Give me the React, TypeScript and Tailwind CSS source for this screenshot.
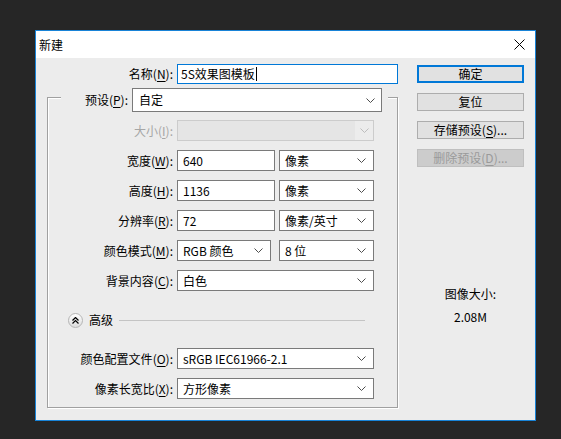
import type { ReactNode } from "react"

function Chevron({ color = "#4d4d4d" }: { color?: string }) {
  return (
    <svg width="9" height="5" viewBox="0 0 9 5" className="shrink-0">
      <path d="M0.5 0.5 L4.5 4.5 L8.5 0.5" fill="none" stroke={color} strokeWidth="1" />
    </svg>
  )
}

function Label({ text, k, className, dim }: { text: string; k: string; className: string; dim?: boolean }) {
  return (
    <span className={`shrink-0 text-right whitespace-nowrap ${dim ? "text-[#a6a6a6]" : "text-black"} ${className}`}>
      {text}(<u className="underline-offset-[2px]">{k}</u>):
    </span>
  )
}

function Select({ value, className }: { value: string; className: string }) {
  return (
    <div className={`flex h-[21px] items-center justify-between border border-[#7a7a7a] bg-white pl-[5px] pr-[7px] ${className}`}>
      <span className="whitespace-nowrap">{value}</span>
      <Chevron />
    </div>
  )
}

function Input({ value, className }: { value: string; className: string }) {
  return (
    <div className={`flex h-[21px] items-center border border-[#7a7a7a] bg-white pl-[5px] ${className}`}>
      {value}
    </div>
  )
}

function Row({ label, k, children, top }: { label: string; k: string; children: ReactNode; top: string }) {
  return (
    <div className={`flex h-[21px] items-center gap-[4px] ${top}`}>
      <Label text={label} k={k} className="w-[125px]" />
      {children}
    </div>
  )
}

function Button({ children, variant }: { children: ReactNode; variant?: "default" | "disabled" }) {
  const look =
    variant === "default"
      ? "border-2 border-[#0078d7] bg-[#e1e1e1] text-black"
      : variant === "disabled"
        ? "border border-[#bfbfbf] bg-[#cccccc] text-[#9a9a9a]"
        : "border border-[#adadad] bg-[#e1e1e1] text-black"
  return (
    <div className={`flex h-[18px] w-[107px] items-center justify-center whitespace-nowrap ${look}`}>{children}</div>
  )
}

export default function App() {
  return (
    <div className="h-[439px] w-[561px] bg-[#262626] pl-[35px] pt-[30px] font-['Microsoft_YaHei','Noto_Sans_CJK_SC',sans-serif] text-[12px] leading-[16px] text-black">
      <div className="flex h-[391px] w-[501px] flex-col border border-[#1883d7] bg-[#ececec]">
        {/* title bar */}
        <div className="flex h-[27px] items-center justify-between bg-white pl-[3px] pr-[10px]">
          <span>新建</span>
          <svg width="11" height="11" viewBox="0 0 11 11">
            <path d="M0.5 0.5 L10.5 10.5 M10.5 0.5 L0.5 10.5" stroke="#000" strokeWidth="1" />
          </svg>
        </div>

        <div className="flex flex-1">
          {/* left column */}
          <div className="flex w-[362px] flex-col">
            <div className="mt-[6px] flex h-[20px] items-center gap-[4px]">
              <Label text="名称" k="N" className="w-[137px]" />
              <div className="flex h-[20px] w-[224px] items-center border border-[#0078d7] bg-white pl-[3px]">
                5S效果图模板
                <span className="ml-[1px] h-[14px] w-px bg-black" />
              </div>
            </div>

            {/* group box */}
            <div className="ml-[11px] mt-[13px] flex h-[311px] w-[351px] flex-col border border-[#a0a0a0] shadow-[inset_1px_1px_0_#fff,1px_1px_0_#fff]">
              <div className="-mt-[10px] ml-[13px] flex h-[24px] w-[327px] items-center gap-[4px] bg-[#ececec]">
                <Label text="预设" k="P" className="w-[67px]" />
                <div className="flex h-[24px] w-[250px] items-center justify-between border border-[#7a7a7a] bg-white pl-[6px] pr-[6px]">
                  <span>自定</span>
                  <Chevron />
                </div>
              </div>

              <div className="mt-[8px] flex h-[21px] items-center gap-[4px]">
                <Label text="大小" k="I" className="w-[125px]" dim />
                <div className="flex h-[21px] w-[197px] border border-[#cccccc]">
                  <div className="flex-1 bg-[#e5e5e5]" />
                  <div className="flex w-[18px] items-center justify-center bg-[#ececec]">
                    <Chevron color="#bdbdbd" />
                  </div>
                </div>
              </div>

              <Row label="宽度" k="W" top="mt-[9px]">
                <Input value="640" className="w-[98px]" />
                <Select value="像素" className="w-[95px]" />
              </Row>
              <Row label="高度" k="H" top="mt-[9px]">
                <Input value="1136" className="w-[98px]" />
                <Select value="像素" className="w-[95px]" />
              </Row>
              <Row label="分辨率" k="R" top="mt-[9px]">
                <Input value="72" className="w-[98px]" />
                <Select value="像素/英寸" className="w-[95px]" />
              </Row>
              <Row label="颜色模式" k="M" top="mt-[9px]">
                <Select value="RGB 颜色" className="w-[94px]" />
                <Select value="8 位" className="ml-[4px] w-[95px]" />
              </Row>
              <Row label="背景内容" k="C" top="mt-[9px]">
                <Select value="白色" className="w-[197px]" />
              </Row>

              <div className="ml-[20px] mt-[21px] flex h-[16px] items-center">
                <div className="flex h-[15px] w-[15px] items-center justify-center rounded-full border border-[#b5b5b5] bg-gradient-to-b from-white to-[#dcdcdc]">
                  <svg width="7" height="7" viewBox="0 0 7 7">
                    <path d="M0.5 3.5 L3.5 0.5 L6.5 3.5 M0.5 6.5 L3.5 3.5 L6.5 6.5" fill="none" stroke="#000" strokeWidth="1.2" />
                  </svg>
                </div>
                <span className="ml-[6px]">高级</span>
                <div className="ml-[6px] h-px w-[246px] bg-[#c4c4c4]" />
              </div>

              <Row label="颜色配置文件" k="O" top="mt-[20px]">
                <Select value="sRGB IEC61966-2.1" className="w-[197px]" />
              </Row>
              <Row label="像素长宽比" k="X" top="mt-[9px]">
                <Select value="方形像素" className="w-[197px]" />
              </Row>
            </div>
          </div>

          {/* right column */}
          <div className="ml-[19px] flex w-[107px] flex-col items-center pt-[7px]">
            <div className="flex flex-col gap-[10px]">
              <Button variant="default">确定</Button>
              <Button>复位</Button>
              <Button>
                存储预设(<u className="underline-offset-[2px]">S</u>)...
              </Button>
              <Button variant="disabled">
                删除预设(<u className="underline-offset-[2px]">D</u>)...
              </Button>
            </div>
            <span className="mt-[119px]">图像大小:</span>
            <span className="mt-[7px]">2.08M</span>
          </div>
        </div>
      </div>
    </div>
  )
}
